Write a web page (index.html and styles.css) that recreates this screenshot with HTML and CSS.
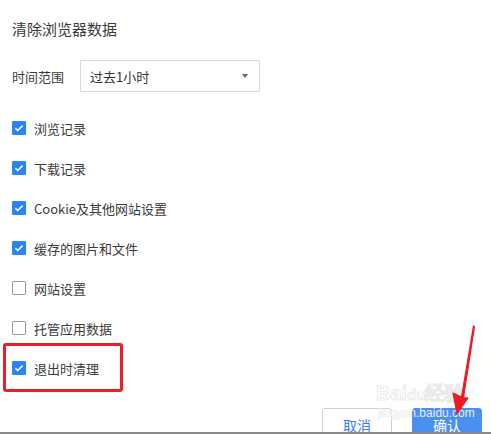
FILE: index.html
```html
<!DOCTYPE html>
<html lang="zh">
<head>
<meta charset="utf-8">
<link rel="stylesheet" href="styles.css">
</head>
<body>
<div class="page">
  <div class="dialog">
    <h1 class="title">清除浏览器数据</h1>
    <div class="range-row">
      <span class="range-label">时间范围</span>
      <div class="select"><span>过去1小时</span><i class="caret"></i></div>
    </div>
    <ul class="options">
      <li class="opt"><span class="cb on"><svg viewBox="0 0 14 14"><path d="M2.8 7.2l2.7 2.7L11.2 4.2" fill="none" stroke="#fff" stroke-width="1.8"/></svg></span>浏览记录</li>
      <li class="opt"><span class="cb on"><svg viewBox="0 0 14 14"><path d="M2.8 7.2l2.7 2.7L11.2 4.2" fill="none" stroke="#fff" stroke-width="1.8"/></svg></span>下载记录</li>
      <li class="opt"><span class="cb on"><svg viewBox="0 0 14 14"><path d="M2.8 7.2l2.7 2.7L11.2 4.2" fill="none" stroke="#fff" stroke-width="1.8"/></svg></span>Cookie及其他网站设置</li>
      <li class="opt"><span class="cb on"><svg viewBox="0 0 14 14"><path d="M2.8 7.2l2.7 2.7L11.2 4.2" fill="none" stroke="#fff" stroke-width="1.8"/></svg></span>缓存的图片和文件</li>
      <li class="opt"><span class="cb"></span>网站设置</li>
      <li class="opt"><span class="cb"></span>托管应用数据</li>
      <li class="opt"><span class="cb on"><svg viewBox="0 0 14 14"><path d="M2.8 7.2l2.7 2.7L11.2 4.2" fill="none" stroke="#fff" stroke-width="1.8"/></svg></span>退出时清理</li>
    </ul>
    <div class="footer">
      <button class="btn cancel">取消</button>
      <button class="btn ok">确认</button>
    </div>
  </div>
  <div class="edge"></div>

  <div class="highlight"></div>
  <div class="watermark">
    <div class="wm-logo">Bai<span class="wm-du">du</span>经验</div>
    <div class="wm-url">jingyan.baidu.com</div>
  </div>
  <svg class="arrow" width="491" height="434" viewBox="0 0 491 434">
    <path d="M473.5 326 L461.5 397 L453 393 L457 414 L468 398 L463.5 397.5 L474.5 326.5 Z" fill="#ec1c24" stroke="#ec1c24" stroke-width="1.2" stroke-linejoin="round"/>
  </svg>
</div>
</body>
</html>
```

FILE: styles.css
```css
html, body {
  margin: 0;
  padding: 0;
  background: #fff;
}
.page {
  position: relative;
  width: 491px;
  height: 434px;
  overflow: hidden;
  display: flex;
  flex-direction: column;
  font-family: "Noto Sans CJK SC", "Noto Sans", sans-serif;
  color: #3a3a3a;
}
.dialog {
  flex: 1;
  display: flex;
  flex-direction: column;
  padding: 19px 9px 0 12px;
  min-height: 0;
}
.title {
  margin: 0;
  font-size: 15px;
  font-weight: normal;
  line-height: 19px;
  height: 19px;
  color: #3a3a3a;
}
.range-row {
  margin-top: 22px;
  display: flex;
  align-items: center;
  height: 32px;
}
.range-label {
  font-size: 13px;
  width: 68px;
  color: #3a3a3a;
}
.select {
  box-sizing: border-box;
  width: 180px;
  height: 32px;
  border: 1px solid #dcdcdc;
  display: flex;
  align-items: center;
  justify-content: space-between;
  padding: 0 11px 0 9px;
  font-size: 13px;
  color: #333;
}
.caret {
  width: 0;
  height: 0;
  border-left: 3px solid transparent;
  border-right: 3px solid transparent;
  border-top: 4px solid #666;
}
.options {
  list-style: none;
  margin: 16px 0 0;
  padding: 0;
}
.opt {
  height: 40px;
  display: flex;
  align-items: center;
  font-size: 13px;
  color: #3a3a3a;
}
.cb {
  box-sizing: border-box;
  width: 14px;
  height: 14px;
  border: 1px solid #9a9a9a;
  border-radius: 1px;
  margin-right: 8px;
  display: flex;
  background: #fff;
}
.cb.on {
  background: #2c84f4;
  border-color: #2c84f4;
}
.cb svg {
  width: 12px;
  height: 12px;
}
.footer {
  margin-top: 20px;
  height: 24px;
  overflow: hidden;
  display: flex;
  justify-content: flex-end;
  gap: 20px;
  align-items: flex-start;
}
.btn {
  box-sizing: border-box;
  width: 70px;
  height: 34px;
  border-radius: 3px;
  font-family: inherit;
  font-size: 14px;
  padding: 0;
}
.cancel {
  background: #fff;
  border: 1px solid #d0d0d0;
  color: #3b7de9;
}
.ok {
  background: #4a8ff2;
  border: 1px solid #4a8ff2;
  color: #fff;
}
.edge {
  height: 2px;
  background: #8a8a8a;
  flex: none;
}
.highlight {
  position: absolute;
  left: 3px;
  top: 343px;
  width: 120px;
  height: 49px;
  box-sizing: border-box;
  border: 3px solid #e8202a;
  border-radius: 3px;
}
.watermark {
  position: absolute;
  left: 376px;
  top: 382px;
  width: 100px;
  text-align: center;
  pointer-events: none;
}
.wm-logo {
  font-family: "Liberation Sans", sans-serif;
  font-size: 20px;
  font-weight: bold;
  line-height: 22px;
  color: rgba(255,255,255,0.5);
  -webkit-text-stroke: 1px rgba(200,200,200,0.4);
  text-align: left;
}
.wm-du {
  font-size: 15px;
}
.wm-url {
  font-family: "Liberation Sans", sans-serif;
  font-size: 12px;
  line-height: 14px;
  color: rgba(255,255,255,0.85);
  text-shadow: 0 0 1px rgba(160,160,160,0.5);
  text-align: left;
  margin-left: 2px;
}
.arrow {
  position: absolute;
  left: 0;
  top: 0;
  pointer-events: none;
}
```
